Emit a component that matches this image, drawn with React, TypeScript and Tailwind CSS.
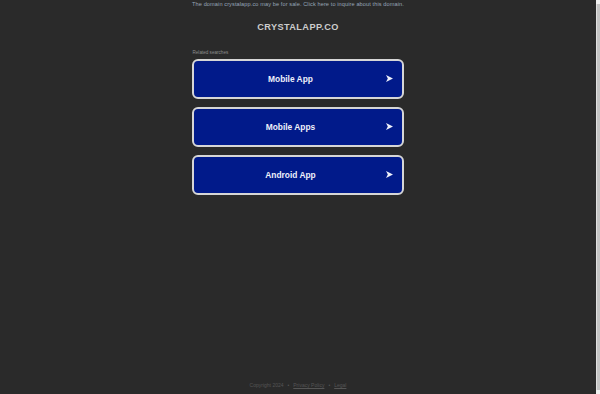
const LINKS = ["Mobile App", "Mobile Apps", "Android App"];

function Arrow() {
  return (
    <svg width="7" height="7" viewBox="0 0 10 10" className="shrink-0">
      <path d="M0 0 L10 5 L0 10 L2.6 5 Z" fill="#eef0fa" />
    </svg>
  );
}

export default function App() {
  return (
    <div
      className="w-[600px] h-[394px] bg-[#2a2a2a] flex overflow-hidden"
      style={{ fontFamily: '"Liberation Sans", Arial, sans-serif' }}
    >
      <div className="flex-1 flex flex-col items-center">
        <p className="text-[5.6px] leading-none text-[#97a6b8] mt-[1px] pt-[0.5px] tracking-[0.1px]">
          The domain crystalapp.co may be for sale. Click here to inquire about this domain.
        </p>
        <h1 className="mt-[16px] text-[9.2px] leading-none font-bold text-[#cccccc] tracking-[0.4px]">
          CRYSTALAPP.CO
        </h1>
        <div className="mt-[19px] w-[212px]">
          <div className="text-[4.6px] leading-none text-[#8c8c8c] ml-[0.5px]">Related searches</div>
          <div className="mt-[3px] flex flex-col gap-[8px]">
            {LINKS.map((l) => (
              <div
                key={l}
                className="h-[40px] rounded-[6px] border-[2px] border-[#d6d6d6] bg-[#011a8a] flex items-center pl-[1px] pr-[9px]"
              >
                <span className="flex-1 text-center text-[8.4px] font-bold text-[#eef0fa]">{l}</span>
                <Arrow />
              </div>
            ))}
          </div>
        </div>
        <div className="mt-auto mb-[6px] text-[5px] leading-none text-[#555555] flex gap-[4px]">
          <span>Copyright 2024</span>
          <span>•</span>
          <span className="underline">Privacy Policy</span>
          <span>•</span>
          <span className="underline">Legal</span>
        </div>
      </div>
      <div className="w-[4px] bg-[#e0e0e0] flex flex-col">
        <div className="h-[4px] bg-[#f1f1f1]" />
        <div className="flex-1 mx-[0.5px] bg-[#c4c4c4]" />
        <div className="h-[4px] bg-[#f1f1f1]" />
      </div>
    </div>
  );
}
